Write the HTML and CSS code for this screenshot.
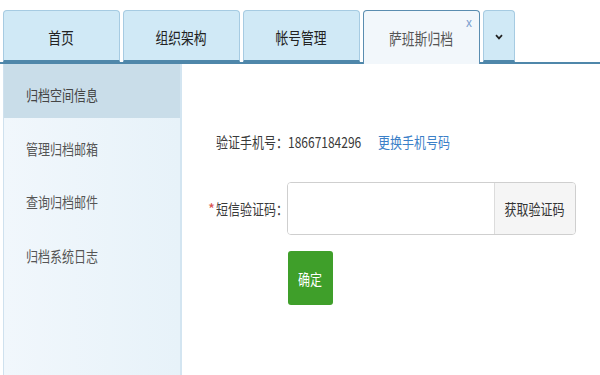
FILE: index.html
```html
<!DOCTYPE html>
<html lang="zh-CN">
<head>
<meta charset="utf-8">
<title>萨班斯归档</title>
<link rel="stylesheet" href="styles.css">
</head>
<body>
<div class="page">
  <div class="tabs">
    <div class="tab"><span class="sx c">首页</span></div>
    <div class="tab"><span class="sx c">组织架构</span></div>
    <div class="tab"><span class="sx c">帐号管理</span></div>
    <div class="tab active"><span class="sx c">萨班斯归档</span><span class="close">x</span></div>
    <div class="tab more">
      <svg class="chev" width="8" height="6" viewBox="0 0 8 6"><polyline points="1,1.2 4,4.4 7,1.2" fill="none" stroke="#222" stroke-width="1.7"/></svg>
    </div>
  </div>
  <div class="main">
    <ul class="side">
      <li class="item on"><span class="sx">归档空间信息</span></li>
      <li class="item"><span class="sx">管理归档邮箱</span></li>
      <li class="item"><span class="sx">查询归档邮件</span></li>
      <li class="item"><span class="sx">归档系统日志</span></li>
    </ul>
    <div class="content">
      <div class="row r1">
        <span class="label"><span class="sx">验证手机号：</span></span><span class="phone"><span class="sx">18667184296</span></span><a class="link" href="#"><span class="sx">更换手机号码</span></a>
      </div>
      <div class="row r2">
        <span class="label"><i class="req">*</i><span class="sx">短信验证码：</span></span>
        <div class="field">
          <input class="input" type="text">
          <button class="get" type="button"><span class="sx c">获取验证码</span></button>
        </div>
      </div>
      <div class="row r3">
        <button class="ok" type="button"><span class="sx c">确定</span></button>
      </div>
    </div>
  </div>
</div>
</body>
</html>
```
FILE: styles.css
```css
html, body {
  margin: 0;
  padding: 0;
  background: #fff;
  overflow: hidden;
}
body {
  width: 600px;
  height: 375px;
  font-family: "Noto Sans CJK SC", "Microsoft YaHei", sans-serif;
}
.page {
  width: 600px;
  height: 375px;
  display: flex;
  flex-direction: column;
  overflow: hidden;
}
.sx {
  display: inline-block;
  white-space: nowrap;
  transform: scaleX(0.8);
  transform-origin: 0 50%;
}
.sx.c {
  transform-origin: 50% 50%;
}
.tabs {
  display: flex;
  gap: 3px;
  padding: 10px 0 0 3px;
  border-bottom: 2px solid #4f87aa;
  flex: none;
}
.tab {
  width: 117px;
  height: 52px;
  box-sizing: border-box;
  margin-bottom: -2px;
  background: #d0e9f6;
  border: 1px solid #a6cbe2;
  border-bottom: 2px solid #4f87aa;
  border-radius: 4px 4px 0 0;
  display: flex;
  align-items: center;
  justify-content: center;
  padding-top: 3px;
  font-size: 16px;
  color: #222;
  position: relative;
}
.tab.active {
  height: 54px;
  background: #f2f7fb;
  border: 1px solid #5a8db0;
  border-bottom: none;
  color: #555;
  padding-top: 1px;
}
.close {
  position: absolute;
  right: 7px;
  top: 4px;
  font-size: 12px;
  line-height: 14px;
  color: #7d9fd0;
}
.tab.more {
  width: 32px;
}
.chev {
  display: block;
}
.main {
  flex: 1;
  display: flex;
  min-height: 0;
}
.side {
  list-style: none;
  margin: 0 0 0 3px;
  padding: 0;
  width: 179px;
  box-sizing: border-box;
  border-left: 1px solid #cfe1ee;
  border-right: 2px solid #d3e5f1;
  background: linear-gradient(to right, #f1f7fc, #e7f2f9);
}
.item {
  height: 53.5px;
  box-sizing: border-box;
  padding: 8px 0 0 22px;
  display: flex;
  align-items: center;
  font-size: 15px;
  color: #555;
}
.item.on {
  background: #c9dde9;
  color: #444;
}
.content {
  flex: 1;
  padding: 67px 0 0 34px;
}
.row {
  display: flex;
  align-items: center;
  font-size: 15px;
  color: #3a3a3a;
}
.r1 {
  height: 20px;
}
.label {
  width: 72px;
  flex: none;
  white-space: nowrap;
  position: relative;
}
.req {
  font-style: normal;
  color: #d9534f;
  display: inline-block;
  width: 8px;
  margin-left: -8px;
}
.phone {
  width: 74px;
  flex: none;
  color: #3a3a3a;
}
.link {
  margin-left: 16px;
  color: #3b80c8;
  text-decoration: none;
}
.r2 {
  margin-top: 31px;
}
.field {
  display: flex;
  width: 289px;
  height: 53px;
  box-sizing: border-box;
  border: 1px solid #cfcfcf;
  border-radius: 4px;
  overflow: hidden;
  margin-left: -1px;
}
.input {
  flex: 1;
  min-width: 0;
  border: none;
  outline: none;
  padding: 0 8px;
  font: inherit;
  background: #fff;
}
.get {
  width: 81px;
  flex: none;
  border: none;
  border-left: 1px solid #dcdcdc;
  background: #f5f5f5;
  font: inherit;
  font-size: 15px;
  color: #333;
  padding: 0;
  display: flex;
  align-items: center;
  justify-content: center;
}
.r3 {
  margin-top: 16px;
  padding-left: 72px;
}
.ok {
  width: 45px;
  height: 54px;
  border: none;
  border-radius: 3px;
  background: #3f9f2a;
  color: #fff;
  font: inherit;
  font-size: 15px;
  padding: 0;
  display: flex;
  align-items: center;
  justify-content: center;
}
```
